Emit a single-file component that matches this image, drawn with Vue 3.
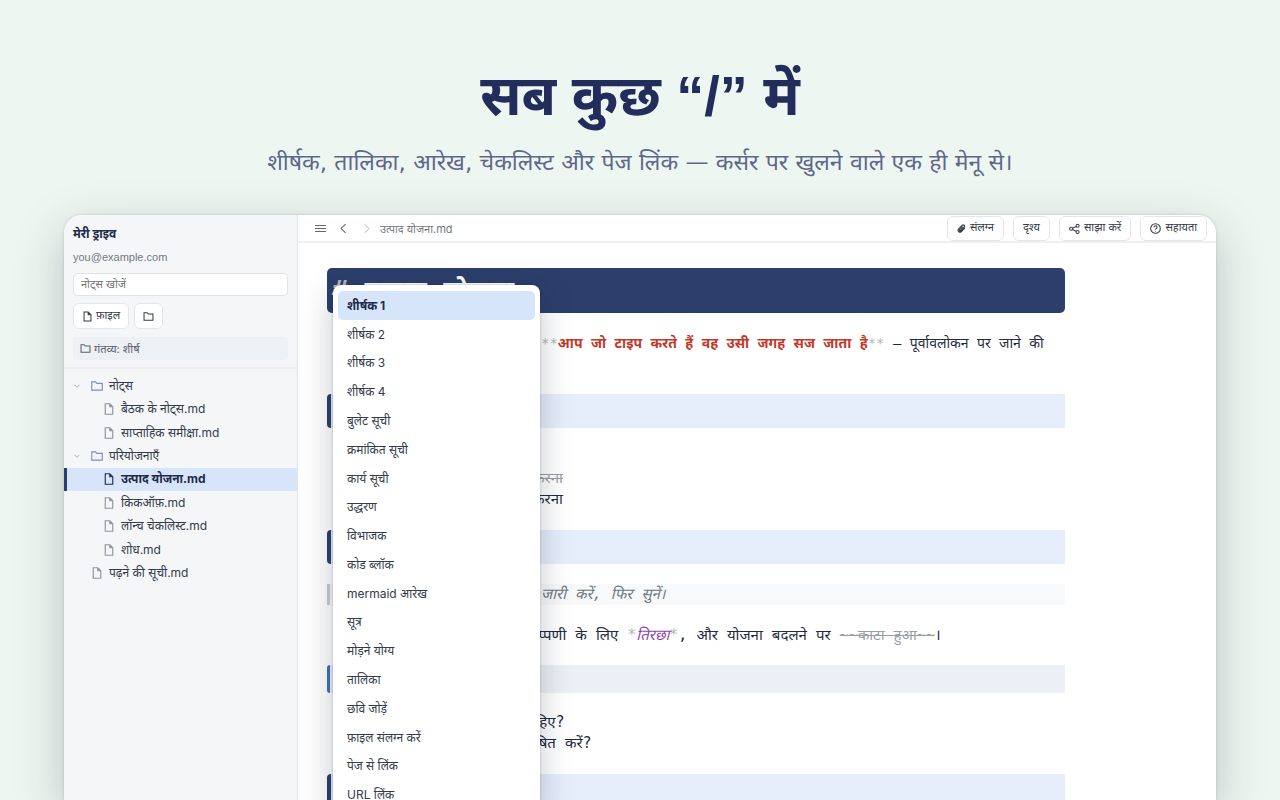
<template>
  <div class="page">
    <header class="hero">
      <h1>सब कुछ “/” में</h1>
      <p>शीर्षक, तालिका, आरेख, चेकलिस्ट और पेज लिंक — कर्सर पर खुलने वाले एक ही मेनू से।</p>
    </header>

    <div class="window">
      <aside class="sidebar">
        <div class="drive">
          <strong class="drive-name">मेरी ड्राइव</strong>
          <span class="email">you@example.com</span>
          <input class="search" type="text" placeholder="नोट्स खोजें" aria-label="नोट्स खोजें" />
          <div class="new-row">
            <button class="btn" type="button">
              <svg class="icon" viewBox="0 0 16 16"><path d="M3 1.5h6l4 4v9H3zM9 1.5v4h4" /></svg>
              <span>फ़ाइल</span>
            </button>
            <button class="btn" type="button" aria-label="फ़ोल्डर">
              <svg class="icon folder" viewBox="0 0 16 16"><path d="M1.5 13.5v-11h4.5l1.8 2h6.7v9z" /></svg>
            </button>
          </div>
          <div class="target">
            <svg class="icon" viewBox="0 0 16 16"><path d="M1.5 13.5v-11h4.5l1.8 2h6.7v9z" /></svg>
            <span>गंतव्य: शीर्ष</span>
          </div>
        </div>

        <nav class="tree">
          <a
            v-for="node in nodes"
            :key="node.name"
            href="#"
            class="node"
            :class="[node.type, { nested: node.nested, active: node.active }]"
          >
            <svg v-if="node.type === 'dir'" class="chevron" viewBox="0 0 16 16"><path d="M3 5.5l5 5 5-5" /></svg>
            <svg v-if="node.type === 'dir'" class="icon" viewBox="0 0 16 16"><path d="M1 13.5v-11h5l1.8 2H15v9z" /></svg>
            <svg v-else class="icon" viewBox="0 0 16 16"><path d="M3 1h6l4 4v10H3zM9 1v4h4" /></svg>
            <span>{{ node.name }}</span>
          </a>
        </nav>
      </aside>

      <main class="main">
        <div class="toolbar">
          <button class="tool" type="button" aria-label="मेनू">
            <svg viewBox="0 0 16 16"><path d="M0 3.5h16M0 8h16M0 12.5h16" /></svg>
          </button>
          <button class="tool" type="button" aria-label="पीछे">
            <svg viewBox="0 0 16 16"><path d="M11 1.5L4.5 8l6.5 6.5" /></svg>
          </button>
          <button class="tool off" type="button" aria-label="आगे">
            <svg viewBox="0 0 16 16"><path d="M5 1.5L11.500 8 5 14.5" /></svg>
          </button>
          <span class="crumb">उत्पाद योजना.md</span>

          <div class="actions">
            <button class="btn" type="button">
              <svg class="icon clip" viewBox="0 0 16 16">
                <path d="M14 7l-6.200 6.300a3.300 3.300 0 0 1-4.800-4.700l6.400-6.400a2.300 2.300 0 0 1 3.300 3.300l-6.200 6.200a1.200 1.200 0 0 1-1.700-1.700l5.500-5.500" />
              </svg>
              <span>संलग्न</span>
            </button>
            <button class="btn" type="button"><span>दृश्य</span></button>
            <button class="btn" type="button">
              <svg class="icon" viewBox="0 0 16 16">
                <circle cx="3" cy="8.5" r="2.200" />
                <circle cx="12.500" cy="4" r="2.200" />
                <circle cx="12.500" cy="13" r="2.200" />
                <path d="M5 7.500l5.500-2.500M5 9.500l5.500 2.500" />
              </svg>
              <span>साझा करें</span>
            </button>
            <button class="btn" type="button">
              <svg class="icon" viewBox="0 0 16 16">
                <circle cx="8" cy="8" r="7" />
                <path d="M5.800 6.300a2.200 2.200 0 1 1 3.300 1.900c-.8.5-1.100.8-1.100 1.600M8 11.500v1" />
              </svg>
              <span>सहायता</span>
            </button>
          </div>
        </div>

        <article class="doc">
          <h2 class="h1"><span class="mark">#</span> उत्पाद योजना</h2>
          <p class="para two">
            <span class="mark">**</span><b>आप जो टाइप करते हैं वह उसी जगह सज जाता है</b><span class="mark">**</span> — पूर्वावलोकन पर जाने की
          </p>
          <div class="h2"></div>
          <ul class="list tasks">
            <li class="done">करना</li>
            <li>करना</li>
          </ul>
          <div class="h2"></div>
          <blockquote class="quote">जारी करें, फिर सुनें।</blockquote>
          <p class="para note">
            टिप्पणी के लिए <span class="mark">*</span><em>तिरछा</em><span class="mark">*</span>, और योजना बदलने पर <del>~~काटा हुआ~~</del>।
          </p>
          <div class="h3"></div>
          <ul class="list questions">
            <li>चाहिए?</li>
            <li>घोषित करें?</li>
          </ul>
          <div class="h2"></div>

          <div class="menu" role="menu">
            <button
              v-for="(item, i) in commands"
              :key="item"
              type="button"
              role="menuitem"
              class="command"
              :class="{ selected: i === 0 }"
            >
              {{ item }}
            </button>
          </div>
        </article>
      </main>
    </div>
  </div>
</template>

<script setup>
const nodes = [
  { name: 'नोट्स', type: 'dir' },
  { name: 'बैठक के नोट्स.md', type: 'file', nested: true },
  { name: 'साप्ताहिक समीक्षा.md', type: 'file', nested: true },
  { name: 'परियोजनाएँ', type: 'dir' },
  { name: 'उत्पाद योजना.md', type: 'file', nested: true, active: true },
  { name: 'किकऑफ़.md', type: 'file', nested: true },
  { name: 'लॉन्च चेकलिस्ट.md', type: 'file', nested: true },
  { name: 'शोध.md', type: 'file', nested: true },
  { name: 'पढ़ने की सूची.md', type: 'file' },
]

const commands = [
  'शीर्षक 1',
  'शीर्षक 2',
  'शीर्षक 3',
  'शीर्षक 4',
  'बुलेट सूची',
  'क्रमांकित सूची',
  'कार्य सूची',
  'उद्धरण',
  'विभाजक',
  'कोड ब्लॉक',
  'mermaid आरेख',
  'सूत्र',
  'मोड़ने योग्य',
  'तालिका',
  'छवि जोड़ें',
  'फ़ाइल संलग्न करें',
  'पेज से लिंक',
  'URL लिंक',
]
</script>

<style>
body {
  background: #eef6f1;
}
</style>

<style scoped>
.page {
  display: flex;
  flex-direction: column;
  height: 100vh;
  overflow: hidden;
  background: #eef6f1;
  font-family: Inter, 'Noto Sans', sans-serif;
  color: #333b4a;
}

.page * {
  box-sizing: border-box;
}

button,
input {
  font-family: inherit;
  color: inherit;
}

svg {
  fill: none;
  stroke: currentColor;
  stroke-width: 1.5;
  flex: none;
}

.hero {
  padding-top: 56px;
  height: 215px;
  flex: none;
  text-align: center;
}

.hero h1 {
  margin: 0;
  font-family: 'Liberation Sans', 'Noto Sans', sans-serif;
  font-size: 56px;
  line-height: 80px;
  font-weight: 700;
  color: #232d5c;
}

.hero p {
  margin: 8px 0 0;
  font-family: 'DejaVu Sans', 'Noto Sans', sans-serif;
  font-size: 23px;
  line-height: 36px;
  color: #5f678a;
}

.window {
  display: flex;
  flex: 1;
  min-height: 0;
  margin: 0 64px;
  border-radius: 18px 18px 0 0;
  overflow: hidden;
  background: #fff;
  box-shadow: 0 16px 48px rgba(30, 45, 60, 0.25), 0 0 3px rgba(30, 45, 60, 0.2);
}

.sidebar {
  width: 234px;
  flex: none;
  background: #f4f6f8;
  border-right: 1px solid #e0e3e8;
}

.drive {
  display: flex;
  flex-direction: column;
  height: 154px;
  padding: 9px 9px 0;
  border-bottom: 2px solid #eceef1;
}

.drive-name {
  font-size: 12px;
  line-height: 20px;
  color: #1f2b4a;
}

.email {
  margin-top: 4px;
  font-family: 'Liberation Sans', sans-serif;
  font-size: 11px;
  line-height: 18px;
  color: #747982;
}

.search {
  width: 100%;
  height: 23px;
  margin-top: 7px;
  padding: 0 7px 2px;
  border: 1px solid #e0e3e8;
  border-radius: 5px;
  background: #fff;
  font-size: 11px;
}

.search::placeholder {
  color: #757575;
}

.new-row {
  display: flex;
  gap: 5px;
  margin-top: 7px;
}

.btn {
  display: flex;
  align-items: center;
  gap: 3px;
  height: 26px;
  padding: 0 8px;
  border: 1px solid #e4e6ea;
  border-radius: 6px;
  background: #fff;
  font-size: 11px;
  line-height: 16px;
}

.btn span {
  padding-bottom: 3px;
}

.icon {
  width: 11px;
  height: 11px;
}

.target {
  display: flex;
  align-items: center;
  gap: 3px;
  height: 23px;
  margin-top: 8px;
  padding: 0 7px;
  border-radius: 4px;
  background: #edf0f5;
  font-size: 11px;
  color: #5a606c;
}

.tree {
  display: grid;
  grid-auto-rows: 1fr;
  height: 211px;
  margin-top: 5px;
}

.node {
  display: flex;
  align-items: center;
  gap: 6px;
  padding-left: 27px;
  font-size: 12px;
  line-height: 20px;
  color: #333b4a;
  text-decoration: none;
}

.node.dir {
  padding-left: 9px;
}

.node.nested {
  padding-left: 39px;
}

.node .icon {
  width: 12px;
  height: 12px;
  color: #8d929b;
}

.node.dir .icon {
  color: #7c89cf;
}

.chevron {
  width: 8px;
  height: 8px;
  margin-right: 4px;
  color: #8d929b;
}

.node.active {
  padding-left: 36px;
  border-left: 3px solid #2c3e6b;
  background: #d7e5fb;
  font-weight: 700;
  color: #1f2b4a;
}

.node.active .icon {
  color: #1f2b4a;
}

.main {
  display: flex;
  flex-direction: column;
  flex: 1;
  min-width: 0;
}

.toolbar {
  display: flex;
  align-items: center;
  gap: 12px;
  height: 28px;
  flex: none;
  padding: 1px 9px 0 17px;
  border-bottom: 2px solid #eeeff1;
}

.tool {
  display: flex;
  padding: 0;
  border: 0;
  background: none;
  color: #63676f;
}

.tool svg {
  width: 11px;
  height: 11px;
}

.tool.off {
  color: #c8cacf;
}

.crumb {
  margin-left: -4px;
  font-size: 11px;
  color: #747982;
}

.actions {
  display: flex;
  gap: 9px;
  margin-left: auto;
}

.actions .btn {
  gap: 4px;
  height: 25px;
  padding: 0 9px;
}

.actions .clip {
  width: 9px;
  height: 9px;
  stroke-width: 2;
}

.doc {
  position: relative;
  flex: 1;
  min-height: 0;
  margin: 25px 151px 0 29px;
  font-family: 'DejaVu Sans Mono', 'Noto Sans', monospace;
  font-size: 15px;
  line-height: 21px;
  color: #1f2b3d;
}

.h1 {
  height: 45px;
  margin: 0;
  padding: 0 5px;
  border-radius: 5px;
  background: #2c3e6b;
  font-size: 27px;
  line-height: 46px;
  color: #fff;
}

.mark {
  color: #b4b7bc;
}

.h1 .mark {
  font-style: italic;
}

.para {
  margin: 0;
  white-space: nowrap;
}

.para.two {
  height: 42px;
  margin: 20px 0 19px;
  padding-left: 214px;
  font-size: 14px;
}

.para b {
  color: #c0392b;
}

.h2 {
  height: 34px;
  border-left: 4px solid #2c3e6b;
  border-radius: 4px 0 0 4px;
  background: #e6edfb;
}

.h3 {
  height: 28px;
  border-left: 3px solid #3f6fb5;
  border-radius: 3px 0 0 3px;
  background: #eceff5;
}

.list {
  margin: 0;
  padding: 0;
  list-style: none;
}

.tasks {
  padding: 40px 0 20px 206px;
}

.tasks .done {
  color: #9a9ea6;
  text-decoration: line-through;
}

.quote {
  margin: 20px 0;
  padding-left: 211px;
  border-left: 3px solid #c9ccd1;
  background: #f8f9fb;
  font-style: italic;
  color: #6f7a80;
}

.quote,
.note em {
  font-family: 'DejaVu Sans Mono', 'Noto Sans Devanagari', 'Noto Sans', monospace;
}

.para.note {
  margin-bottom: 19px;
  padding-left: 200px;
}

.note em {
  color: #8e44ad;
}

.note del {
  color: #9a9ea6;
}

.questions {
  padding: 19px 0 20px 195px;
}

.menu {
  position: absolute;
  top: 17px;
  left: 6px;
  display: grid;
  grid-auto-rows: 1fr;
  width: 207px;
  height: 530px;
  padding: 6px 5px;
  border-radius: 8px;
  background: #fff;
  box-shadow: 0 8px 32px rgba(20, 30, 50, 0.25), 0 0 2px rgba(20, 30, 50, 0.3);
  font-family: Inter, 'Noto Sans', sans-serif;
}

.command {
  padding: 0 9px;
  border: 0;
  border-radius: 5px;
  background: none;
  font-size: 12px;
  text-align: left;
  color: #333b4a;
}

.command.selected {
  background: #d7e5fb;
  font-weight: 700;
  color: #1f2b4a;
}
</style>
